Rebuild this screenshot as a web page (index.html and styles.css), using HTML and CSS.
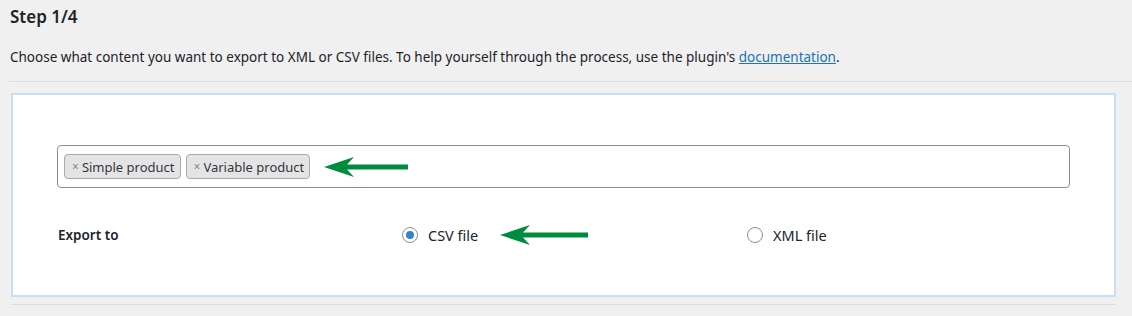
FILE: index.html
```html
<!DOCTYPE html>
<html lang="en">
<head>
  <meta charset="UTF-8">
  <title>Export - Step 1/4</title>
  <link rel="stylesheet" href="styles.css">
</head>
<body>
  <div class="wrap">
    <h2 class="step-title">Step 1/4</h2>
    <p class="intro">Choose what content you want to export to XML or CSV files. To help yourself through the process, use the plugin's <a href="#">documentation</a>.</p>
    <hr class="sep">

    <div class="export-box">
      <div class="select">
        <span class="tag"><span class="tag-x">×</span>Simple product</span>
        <span class="tag"><span class="tag-x">×</span>Variable product</span>
        <svg class="arrow arrow-tags" width="84" height="22" viewBox="0 0 84 22">
          <polygon points="0,11 30,1 23,8.5 84,8.5 84,13.5 23,13.5 30,21" fill="#008c3e"/>
        </svg>
      </div>

      <div class="export-row">
        <div class="row-label">Export to</div>
        <label class="choice">
          <span class="radio checked"></span>CSV file
          <svg class="arrow arrow-csv" width="88" height="22" viewBox="0 0 88 22">
            <polygon points="0,11 30,1 23,8.5 88,8.5 88,13.5 23,13.5 30,21" fill="#008c3e"/>
          </svg>
        </label>
        <label class="choice">
          <span class="radio"></span>XML file
        </label>
      </div>
    </div>
    <hr class="sep sep-bottom">
  </div>
</body>
</html>
```

FILE: styles.css
```css
body {
  margin: 0;
  background: #f0f0f1;
  color: #1d2327;
  font-family: "Noto Sans", "Open Sans", sans-serif;
  font-size: 13px;
}

.wrap {
  padding: 0 16px 0 10px;
}

.step-title {
  margin: 0;
  padding-top: 5px;
  font-size: 17px;
  font-weight: 600;
  line-height: 24px;
}

.intro {
  margin: 18px 0 0;
  line-height: 20px;
  font-size: 13.5px;
}

.intro a {
  color: #2271b1;
}

.sep {
  border: 0;
  border-top: 1px solid #dcdcde;
  margin: 14px -16px 0 -1px;
}

.export-box {
  margin: 11px 0 0 1px;
  background: #fff;
  border: 2px solid #c5defa;
  padding: 50px 44px 0 44px;
  height: 150px;
  width: 1013px;
}

.select {
  display: flex;
  align-items: center;
  gap: 5px;
  border: 1px solid #8c8f94;
  border-radius: 4px;
  height: 41px;
  padding: 0 6px;
}

.tag {
  display: inline-flex;
  align-items: center;
  height: 23px;
  padding: 0 5px 0 7px;
  background: #e4e4e4;
  border: 1px solid #aaa;
  border-radius: 4px;
  font-size: 13px;
  color: #32373c;
}

.tag-x {
  color: #888;
  font-size: 12px;
  margin-right: 3px;
}

.arrow {
  display: block;
}

.arrow-tags {
  margin-left: 9px;
}

.export-row {
  display: grid;
  grid-template-columns: 344px 345px 1fr;
  align-items: center;
  margin-top: 36px;
  padding-left: 1px;
}

.row-label {
  font-weight: 600;
  font-size: 13.5px;
}

.choice {
  display: flex;
  align-items: center;
  font-size: 14.5px;
}

.radio {
  width: 14px;
  height: 14px;
  border: 1px solid #8c8f94;
  border-radius: 50%;
  margin-right: 10px;
  position: relative;
  background: #fff;
}

.radio.checked::after {
  content: "";
  position: absolute;
  left: 3px;
  top: 3px;
  width: 8px;
  height: 8px;
  border-radius: 50%;
  background: #3582c4;
}

.arrow-csv {
  margin-left: 22px;
}

.sep-bottom {
  margin: 7px 0 0 1px;
  width: 1105px;
}
```
